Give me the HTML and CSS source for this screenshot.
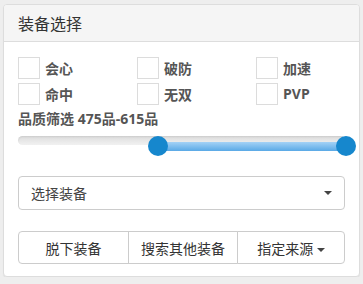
FILE: index.html
```html
<!DOCTYPE html>
<html lang="zh-CN">
<head>
  <meta charset="UTF-8">
  <title>装备选择</title>
  <link rel="stylesheet" href="styles.css">
</head>
<body>

<div class="panel">
  <div class="panel-heading">装备选择</div>
  <div class="panel-body">
    <div class="checks">
      <label class="check"><span class="box"></span>会心</label>
      <label class="check"><span class="box"></span>破防</label>
      <label class="check"><span class="box"></span>加速</label>
      <label class="check"><span class="box"></span>命中</label>
      <label class="check"><span class="box"></span>无双</label>
      <label class="check"><span class="box"></span>PVP</label>
    </div>

    <div class="quality">品质筛选 475品-615品</div>

    <div class="slider">
      <div class="track"></div>
      <div class="range"></div>
      <span class="handle handle-min"></span>
      <span class="handle handle-max"></span>
    </div>

    <div class="select">
      <span>选择装备</span>
      <span class="caret"></span>
    </div>

    <div class="btn-group">
      <button class="btn">脱下装备</button>
      <button class="btn">搜索其他装备</button>
      <button class="btn">指定来源 <span class="caret"></span></button>
    </div>
  </div>
</div>

</body>
</html>
```

FILE: styles.css
```css
body {
  margin: 0;
  padding: 4px 3px 0;
  background: #eeeeee;
  font-family: "Open Sans", "Noto Sans CJK SC", sans-serif;
  color: #333;
  font-size: 14px;
}
.panel {
  width: 355px;
  background: #fff;
  border: 1px solid #dddddd;
  border-radius: 4px;
  box-shadow: 0 1px 1px rgba(0,0,0,0.05);
}
.panel-heading {
  background: #f5f5f5;
  border-bottom: 1px solid #dddddd;
  border-radius: 3px 3px 0 0;
  height: 36px;
  padding: 0 14px;
  display: flex;
  align-items: center;
  font-size: 16px;
  color: #333;
}
.panel-body {
  padding: 15px 14px 12px;
}
.checks {
  display: grid;
  grid-template-columns: 119px 119px 1fr;
  row-gap: 5px;
}
.check {
  display: flex;
  align-items: center;
  gap: 5px;
  font-weight: bold;
  color: #555;
  font-size: 14px;
  height: 21px;
}
.box {
  width: 20px;
  height: 20px;
  border: 1px solid #dcdcdc;
  background: #fff;
}
.quality {
  margin-top: 5px;
  font-weight: bold;
  color: #555;
  font-size: 14px;
  line-height: 19px;
}
.slider {
  position: relative;
  height: 20px;
  margin-top: 8px;
}
.track {
  margin-top: 6px;
  height: 9px;
  border-radius: 5px;
  background: linear-gradient(#dcdcdc, #f2f2f2);
  box-shadow: inset 0 1px 2px rgba(0,0,0,0.08);
}
.range {
  position: absolute;
  top: 6px;
  left: 140px;
  right: 0;
  height: 9px;
  border-radius: 0 5px 5px 0;
  background: linear-gradient(#a4d2f6, #5aa9e6);
}
.handle {
  position: absolute;
  top: 0;
  width: 20px;
  height: 20px;
  border-radius: 50%;
  background: #1687cd;
}
.handle-min {
  left: 130px;
}
.handle-max {
  left: 318px;
}
.select {
  margin-top: 20px;
  height: 32px;
  border: 1px solid #cccccc;
  border-radius: 4px;
  display: flex;
  align-items: center;
  justify-content: space-between;
  padding: 0 12px 0 12px;
  font-size: 14px;
  color: #444;
}
.caret {
  display: inline-block;
  width: 0;
  height: 0;
  border-top: 4px solid #444;
  border-left: 4px solid transparent;
  border-right: 4px solid transparent;
  vertical-align: middle;
}
.btn-group {
  margin-top: 21px;
  display: flex;
}
.btn {
  height: 33px;
  background: #fff;
  border: 1px solid #cccccc;
  font-family: inherit;
  font-size: 14px;
  color: #333;
  padding: 0;
  margin-left: -1px;
}
.btn:nth-child(1) {
  width: 111px;
  margin-left: 0;
  border-radius: 4px 0 0 4px;
}
.btn:nth-child(2) {
  width: 110px;
}
.btn:nth-child(3) {
  flex: 1;
  border-radius: 0 4px 4px 0;
}
```
